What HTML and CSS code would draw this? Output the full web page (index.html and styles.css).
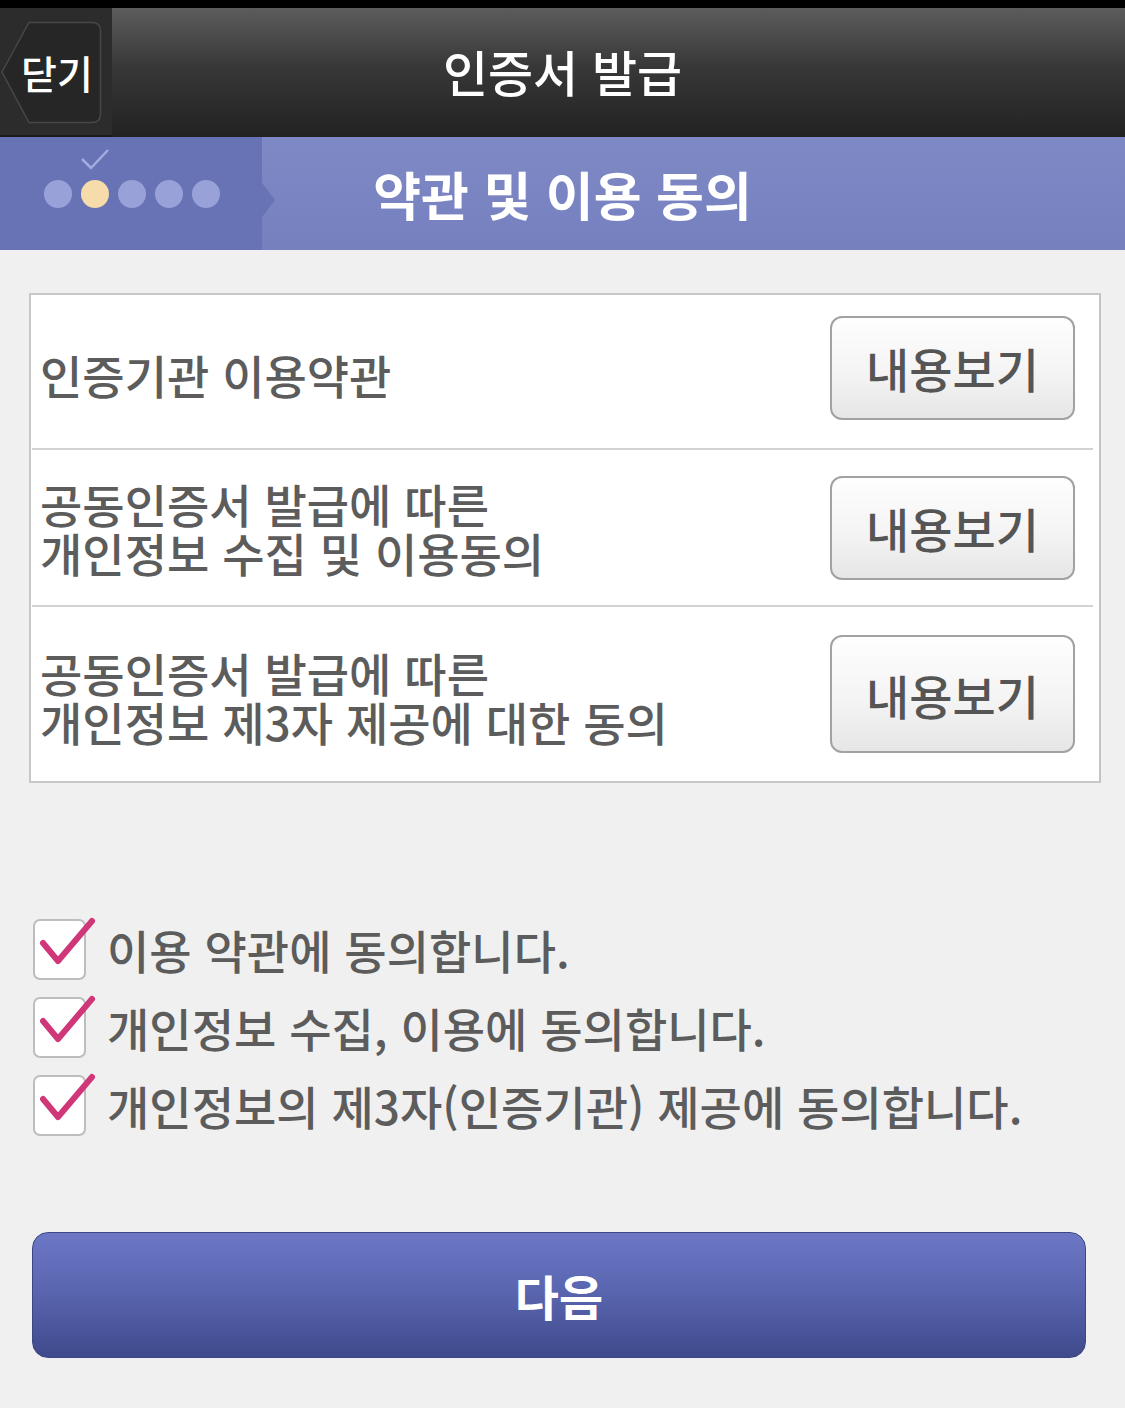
FILE: index.html
```html
<!DOCTYPE html>
<html lang="ko">
<head>
    <meta charset="utf-8">
    <title>인증서 발급</title>
    <link rel="stylesheet" href="styles.css">
</head>
<body>
    <div class="status-strip"></div>

    <header class="app-bar">
        <div class="back-area">
            <button class="back-btn">
                <svg class="back-shape" width="102" height="103" viewBox="0 0 102 103">
                    <path d="M2 51 L29 1.5 H92 Q100.5 1.5 100.5 10 V93 Q100.5 101.5 92 101.5 H29 Z" fill="#262626" stroke="#474747" stroke-width="1.5"/>
                </svg>
                <span class="back-label">닫기</span>
            </button>
        </div>
        <h1 class="app-title">인증서 발급</h1>
        <div class="app-spacer"></div>
    </header>

    <div class="step-bar">
        <div class="steps">
            <svg class="step-check" width="30" height="24" viewBox="0 0 30 24">
                <path d="M2 12 L11 21 L28 3" fill="none" stroke="#a3abe0" stroke-width="2.5"/>
            </svg>
            <div class="dots">
                <span class="dot"></span>
                <span class="dot current"></span>
                <span class="dot"></span>
                <span class="dot"></span>
                <span class="dot"></span>
            </div>
        </div>
        <h2 class="step-title">약관 및 이용 동의</h2>
        <div class="step-spacer"></div>
    </div>

    <main class="content">
        <div class="terms">
            <div class="term-row row-1">
                <p class="term-name">인증기관 이용약관</p>
                <button class="view-btn">내용보기</button>
            </div>
            <div class="term-row row-2">
                <p class="term-name">공동인증서 발급에 따른<br>개인정보 수집 및 이용동의</p>
                <button class="view-btn">내용보기</button>
            </div>
            <div class="term-row row-3">
                <p class="term-name">공동인증서 발급에 따른<br>개인정보 제3자 제공에 대한 동의</p>
                <button class="view-btn tall">내용보기</button>
            </div>
        </div>

        <ul class="agree-list">
            <li class="agree-item">
                <span class="checkbox">
                    <svg width="62" height="62" viewBox="0 0 62 62"><path d="M8 26 L23 44 L57 4" fill="none" stroke="#cf3778" stroke-width="6" stroke-linecap="round" stroke-linejoin="round"/></svg>
                </span>
                이용 약관에 동의합니다.
            </li>
            <li class="agree-item">
                <span class="checkbox">
                    <svg width="62" height="62" viewBox="0 0 62 62"><path d="M8 26 L23 44 L57 4" fill="none" stroke="#cf3778" stroke-width="6" stroke-linecap="round" stroke-linejoin="round"/></svg>
                </span>
                개인정보 수집, 이용에 동의합니다.
            </li>
            <li class="agree-item">
                <span class="checkbox">
                    <svg width="62" height="62" viewBox="0 0 62 62"><path d="M8 26 L23 44 L57 4" fill="none" stroke="#cf3778" stroke-width="6" stroke-linecap="round" stroke-linejoin="round"/></svg>
                </span>
                개인정보의 제3자(인증기관) 제공에 동의합니다.
            </li>
        </ul>

        <button class="next-btn">다음</button>
    </main>
</body>
</html>
```

FILE: styles.css
```css
body {
    margin: 0;
    width: 1125px;
    height: 1408px;
    overflow: hidden;
    background-color: #f0f0f0;
    font-family: "Noto Sans CJK KR", "Noto Sans", sans-serif;
    color: #5c5c5c;
}

button {
    font-family: inherit;
    cursor: pointer;
}

.status-strip {
    height: 8px;
    background-color: #000;
}

/* top bar */
.app-bar {
    display: flex;
    align-items: stretch;
    height: 129px;
    background: linear-gradient(#5c5c5c, #383838 45%, #222222);
}

.back-area {
    width: 112px;
    background-color: #2c2c2c;
    border-bottom: 2px solid #1a1a1a;
    box-sizing: border-box;
    padding-top: 13px;
}

.back-btn {
    position: relative;
    width: 102px;
    height: 103px;
    padding: 0;
    border: none;
    background: none;
}

.back-shape {
    position: absolute;
    left: 0;
    top: 0;
}

.back-label {
    position: relative;
    display: block;
    padding-left: 12px;
    color: #fff;
    font-size: 39px;
    font-weight: 500;
    line-height: 103px;
}

.app-title {
    flex: 1;
    margin: 0;
    text-align: center;
    color: #fff;
    font-size: 49px;
    font-weight: 500;
    line-height: 126px;
}

.app-spacer {
    width: 112px;
}

/* step bar */
.step-bar {
    display: flex;
    height: 113px;
    background: linear-gradient(#7e89c5, #7680bf);
}

.steps {
    position: relative;
    width: 262px;
    background-color: #6873b5;
    display: flex;
    flex-direction: column;
    padding-left: 44px;
    box-sizing: border-box;
}

.steps::after {
    content: "";
    position: absolute;
    right: -13px;
    top: 46px;
    border-top: 17px solid transparent;
    border-bottom: 17px solid transparent;
    border-left: 13px solid #6873b5;
}

.step-check {
    margin: 10px 0 0 36px;
}

.dots {
    display: flex;
    gap: 9px;
    margin-top: 9px;
}

.dot {
    width: 28px;
    height: 28px;
    border-radius: 50%;
    background-color: #98a1d8;
}

.dot.current {
    background-color: #f5dcaa;
}

.step-title {
    flex: 1;
    margin: 0;
    text-align: center;
    color: #fff;
    font-size: 52px;
    font-weight: 700;
    line-height: 113px;
}

.step-spacer {
    width: 262px;
}

/* terms table */
.content {
    padding: 43px 0 0 29px;
}

.terms {
    width: 1072px;
    box-sizing: border-box;
    background-color: #fff;
    border: 2px solid #c8c8c8;
    border-right-color: #c4c4c4;
    padding: 0 6px 0 1px;
}

.term-row {
    display: flex;
    align-items: center;
    justify-content: space-between;
    padding: 0 18px 0 8px;
    border-bottom: 2px solid #d2d2d2;
}

.term-row:last-child {
    border-bottom: none;
}

.row-1 {
    height: 153px;
}

.row-2 {
    height: 155px;
}

.row-3 {
    height: 174px;
}

.term-name {
    margin: 0;
    font-size: 46px;
    font-weight: 500;
    line-height: 49px;
    color: #5c5c5c;
}

.row-1 .term-name {
    margin-top: 6px;
}

.row-3 .term-name {
    margin-top: 6px;
}

.view-btn {
    width: 245px;
    height: 104px;
    border: 2px solid #a2a2a2;
    border-radius: 12px;
    background: linear-gradient(#fefefe, #f4f4f4 55%, #e6e6e6);
    color: #555;
    font-size: 47px;
    font-weight: 500;
    padding: 0;
}

.row-1 .view-btn {
    margin-top: -8px;
}

.view-btn.tall {
    height: 118px;
}

/* agreements */
.agree-list {
    list-style: none;
    margin: 127px 0 0 0;
    padding: 0 0 0 4px;
}

.agree-item {
    display: flex;
    align-items: center;
    gap: 21px;
    height: 78px;
    font-size: 46px;
    font-weight: 500;
    color: #5c5c5c;
}

.checkbox {
    position: relative;
    flex: none;
    width: 49px;
    height: 57px;
    border: 2px solid #bdbdbd;
    border-radius: 7px;
    background-color: #fff;
}

.checkbox svg {
    position: absolute;
    left: 0;
    top: -4px;
}

/* next */
.next-btn {
    display: block;
    width: 1054px;
    height: 126px;
    margin: 88px 0 0 3px;
    border: 1px solid #3c4683;
    border-radius: 16px;
    background: linear-gradient(#6c78c5, #5a66b0 45%, #3f4a8c);
    color: #fff;
    font-size: 48px;
    font-weight: 700;
    padding: 0;
}
```
